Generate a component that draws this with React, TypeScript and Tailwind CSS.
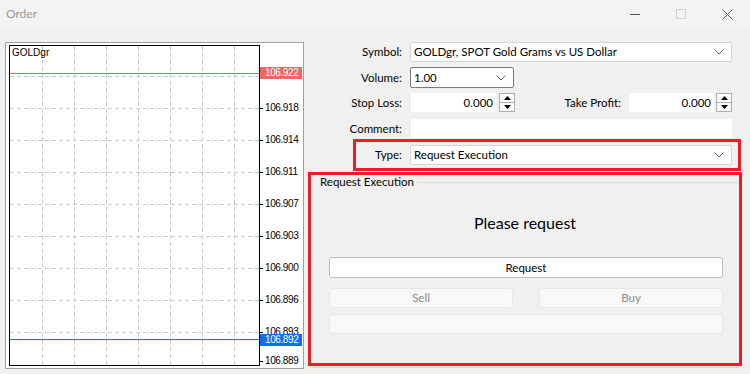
import React from "react";

// Order dialog with price chart (MT5-style), annotated with two red boxes.

const UI_FONT = { fontFamily: "Lato, 'Open Sans', sans-serif" };
const CHART_FONT = { fontFamily: "'Liberation Sans', Arial, sans-serif" };

const GRID_X = [32, 64, 96, 128, 160, 192, 224];
const GRID_Y = [30, 62, 94, 126, 158, 190, 222, 254, 286];

// y offsets relative to the top of the price axis column
const PRICES = [
  { y: 31, v: "106.922" },
  { y: 63, v: "106.918" },
  { y: 95, v: "106.914" },
  { y: 127, v: "106.911" },
  { y: 159, v: "106.907" },
  { y: 191, v: "106.903" },
  { y: 223, v: "106.900" },
  { y: 255, v: "106.896" },
  { y: 287, v: "106.893" },
  { y: 316, v: "106.889" },
];

function Chevron() {
  return (
    <svg width="10" height="6" viewBox="0 0 10 6" className="shrink-0">
      <path d="M0.5 0.5 L5 5 L9.5 0.5" fill="none" stroke="#606060" strokeWidth="1" />
    </svg>
  );
}

function Select({ value, className }: { value: string; className: string }) {
  return (
    <div
      className={`flex items-center justify-between rounded-[2px] bg-white pl-[3px] pr-[7px] text-black ${className}`}
    >
      <span>{value}</span>
      <Chevron />
    </div>
  );
}

function Spin() {
  return (
    <div className="flex h-[19px] w-[16px] flex-col border border-[#adadad] bg-[#fdfdfd]">
      <div className="flex flex-1 items-center justify-center border-b border-[#adadad]">
        <svg width="7" height="4" viewBox="0 0 7 4">
          <path d="M0 4 L3.5 0 L7 4 Z" fill="#000" />
        </svg>
      </div>
      <div className="flex flex-1 items-center justify-center">
        <svg width="7" height="4" viewBox="0 0 7 4">
          <path d="M0 0 L3.5 4 L7 0 Z" fill="#000" />
        </svg>
      </div>
    </div>
  );
}

function Chart() {
  return (
    <div
      className="ml-[5px] flex h-[327px] w-[299px] shrink-0 border border-[#a0a0a0] bg-white pl-[3px] pt-[2px]"
      style={CHART_FONT}
    >
      <div className="relative h-[321px] w-[251px] shrink-0 border border-black">
        <svg width="249" height="319" className="block">
          {GRID_X.map((x) => (
            <line key={`v${x}`} x1={x + 0.5} y1={0} x2={x + 0.5} y2={319} stroke="#c8c8c8" strokeDasharray="4 3" />
          ))}
          {GRID_Y.map((y) => (
            <line key={`h${y}`} x1={0} y1={y + 0.5} x2={249} y2={y + 0.5} stroke="#c8c8c8" strokeDasharray="4 3" />
          ))}
          <line x1={0} y1={27.5} x2={249} y2={27.5} stroke="#f86464" />
          <line x1={0} y1={293.5} x2={249} y2={293.5} stroke="#1c6fe6" />
        </svg>
        <span className="absolute left-[2px] top-[2px] text-[10px] leading-none text-black">GOLDgr</span>
      </div>
      <div className="relative flex-1">
        <svg width="4" height="321" className="absolute left-0 top-0">
          {PRICES.map((p) => (
            <line key={p.v} x1={0} y1={p.y + 0.5} x2={3} y2={p.y + 0.5} stroke="#000" />
          ))}
        </svg>
        {PRICES.map((p) => (
          <span
            key={p.v}
            className="absolute left-[5px] -translate-y-1/2 text-[10px] leading-none tracking-[-0.4px] text-black"
            style={{ top: p.y }}
          >
            {p.v}
          </span>
        ))}
        <div className="absolute left-0 top-[22px] flex h-[12px] w-[42px] items-center bg-[#f86464] pl-[5px] text-[10px] leading-none tracking-[-0.4px] text-white">
          106.922
        </div>
        <div className="absolute left-0 top-[289px] flex h-[12px] w-[42px] items-center bg-[#0d6efd] pl-[5px] text-[10px] leading-none tracking-[-0.4px] text-white">
          106.892
        </div>
      </div>
    </div>
  );
}

function OrderForm() {
  return (
    <div className="flex w-[446px] flex-col text-[11.5px] text-black" style={UI_FONT}>
      <div className="flex h-[20px] items-center">
        <span className="w-[98px] text-right">Symbol:</span>
        <Select value="GOLDgr, SPOT Gold Grams vs US Dollar" className="ml-[8px] h-[20px] w-[322px] border border-[#d4d4d4]" />
      </div>

      <div className="mt-[5px] flex h-[21px] items-center">
        <span className="w-[98px] text-right">Volume:</span>
        <Select value="1.00" className="ml-[8px] h-[21px] w-[104px] border border-[#7a7a7a]" />
      </div>

      <div className="mt-[5px] flex h-[19px] items-center">
        <span className="w-[98px] text-right">Stop Loss:</span>
        <div className="ml-[9px] flex h-[19px] w-[85px] items-center justify-end bg-white pr-[3px]">0.000</div>
        <div className="ml-[3px]">
          <Spin />
        </div>
        <span className="w-[106px] text-right">Take Profit:</span>
        <div className="ml-[8px] flex h-[19px] w-[85px] items-center justify-end bg-white pr-[3px]">0.000</div>
        <div className="ml-[2px]">
          <Spin />
        </div>
      </div>

      <div className="mt-[7px] flex h-[19px] items-center">
        <span className="w-[98px] text-right">Comment:</span>
        <div className="ml-[9px] h-[19px] w-[321px] bg-white" />
      </div>

      <div className="ml-[49px] mt-[1px] flex h-[32px] w-[388px] items-center border-[3px] border-[#ed1c24]">
        <span className="w-[46px] text-right">Type:</span>
        <Select value="Request Execution" className="ml-[8px] h-[20px] w-[322px] border border-[#d4d4d4]" />
      </div>

      <div className="ml-[4px] mt-[1px] flex h-[194px] w-[434px] flex-col border-[3px] border-[#ed1c24]">
        <div className="flex h-[14px] items-center pl-[9px]">
          <span className="leading-none">Request Execution</span>
          <div className="ml-[3px] h-px flex-1 bg-[#dcdcdc]" />
        </div>
        <div className="mt-[23px] text-center text-[16px] leading-[22px]">Please request</div>
        <div className="flex flex-col pl-[18px] pr-[16px]">
          <div className="mt-[23px] flex h-[21px] items-center justify-center rounded-[3px] border border-[#bdbdbd] bg-white">
            Request
          </div>
          <div className="mt-[10px] flex gap-[26px]">
            <div className="flex h-[20px] flex-1 items-center justify-center rounded-[3px] border border-[#e6e6e6] bg-[#f8f8f8] text-[#8c8c8c]">
              Sell
            </div>
            <div className="flex h-[20px] flex-1 items-center justify-center rounded-[3px] border border-[#e6e6e6] bg-[#f8f8f8] text-[#8c8c8c]">
              Buy
            </div>
          </div>
          <div className="mt-[6px] h-[20px] rounded-[3px] border border-[#e6e6e6] bg-[#f8f8f8]" />
        </div>
      </div>
      <div className="ml-[8px] mt-[1px] h-px w-[428px] bg-[#d4d4d4]" />
    </div>
  );
}

export default function App() {
  return (
    <div className="flex h-[374px] w-[750px] flex-col overflow-hidden bg-[#f0f0f0]">
      <div className="flex h-[28px] shrink-0 items-center bg-[#f3f3f3]" style={UI_FONT}>
        <span className="pl-[6px] text-[12px] text-[#9a9a9a]">Order</span>
        <div className="flex-1" />
        <div className="flex h-full w-[46px] items-center justify-center">
          <svg width="10" height="10" viewBox="0 0 10 10">
            <line x1="0" y1="5.5" x2="10" y2="5.5" stroke="#555" />
          </svg>
        </div>
        <div className="flex h-full w-[46px] items-center justify-center">
          <svg width="10" height="10" viewBox="0 0 10 10">
            <rect x="0.5" y="0.5" width="9" height="9" fill="none" stroke="#d0d0d0" />
          </svg>
        </div>
        <div className="flex h-full w-[46px] items-center justify-center">
          <svg width="11" height="11" viewBox="0 0 11 11">
            <path d="M0.5 0.5 L10.5 10.5 M10.5 0.5 L0.5 10.5" stroke="#555" strokeWidth="1" />
          </svg>
        </div>
      </div>
      <div className="flex pt-[14px]">
        <Chart />
        <OrderForm />
      </div>
    </div>
  );
}
